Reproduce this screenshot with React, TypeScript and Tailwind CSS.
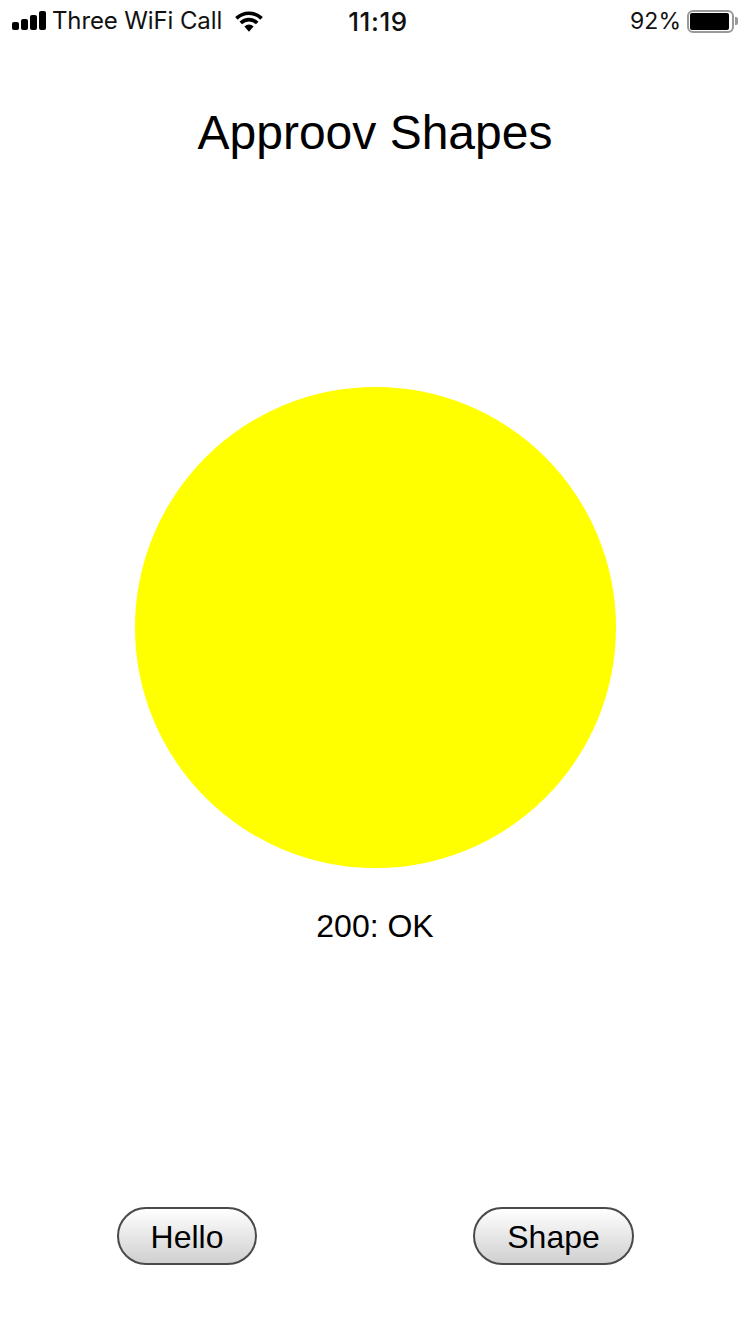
import React from 'react';

const sans = { fontFamily: '"Liberation Sans", Arial, sans-serif' };

const PillButton: React.FC<{ label: string; width: string }> = ({ label, width }) => (
  <div
    className={`${width} h-[58px] flex items-center justify-center pt-[2px] rounded-[29px] border-2 border-[#4a4a4a] bg-gradient-to-b from-white to-[#d0d0d0] text-[32px] text-black font-['Liberation_Sans',Arial,sans-serif]`}
  >
    {label}
  </div>
);

const StatusBar = () => (
  <div className="h-[42px] flex items-center justify-between text-[#111111] font-['Inter',sans-serif] text-[24px] pl-[12px] pr-[12px]">
    <div className="w-[286px] flex items-center">
      <div className="flex items-end gap-[2px] h-[20px]">
        <div className="w-[7px] h-[8px] rounded-[2px] bg-black mb-[1px]" />
        <div className="w-[7px] h-[11px] rounded-[2px] bg-black mb-[1px]" />
        <div className="w-[7px] h-[15px] rounded-[2px] bg-black mb-[1px]" />
        <div className="w-[7px] h-[19px] rounded-[2px] bg-black mb-[1px]" />
      </div>
      <span className="ml-[6px] whitespace-nowrap tracking-[-0.12px]">Three WiFi Call</span>
      <svg className="ml-[13px]" width="28" height="21" viewBox="0 0 28 21">
        <path d="M14 20.8 L9.4 15.4 A6.8 6.8 0 0 1 18.6 15.4 Z" fill="#000" />
        <path d="M1.4 7.4 A18 18 0 0 1 26.6 7.4" fill="none" stroke="#000" strokeWidth="3.6" />
        <path d="M5.8 12 A11.6 11.6 0 0 1 22.2 12" fill="none" stroke="#000" strokeWidth="3.6" />
      </svg>
    </div>
    <div className="font-medium text-[26px] tracking-[0.6px]">11:19</div>
    <div className="w-[280px] flex items-center justify-end">
      <span className="text-[23px]">92%</span>
      <div className="ml-[6px] w-[47px] h-[23px] rounded-[6px] border-2 border-[#999999] p-[1px]">
        <div className="w-[39px] h-full rounded-[2px] bg-black" />
      </div>
      <div className="ml-[1px] w-[3px] h-[8px] rounded-r-[2px] bg-[#999999]" />
    </div>
  </div>
);

export default function App() {
  return (
    <div className="w-[750px] h-[1334px] bg-white flex flex-col items-center overflow-hidden" style={sans}>
      <div className="w-full">
        <StatusBar />
      </div>
      <h1 className="mt-[61px] text-[48px] leading-[60px] text-black">Approov Shapes</h1>
      <div className="mt-[224px] ml-[1px] w-[481px] h-[481px] rounded-full bg-[#ffff00]" />
      <div className="mt-[39px] text-[32px] leading-[38px] text-black">200: OK</div>
      <div className="mt-[262px] w-full flex justify-between pl-[117px] pr-[116px]">
        <PillButton label="Hello" width="w-[140px]" />
        <PillButton label="Shape" width="w-[161px]" />
      </div>
    </div>
  );
}
